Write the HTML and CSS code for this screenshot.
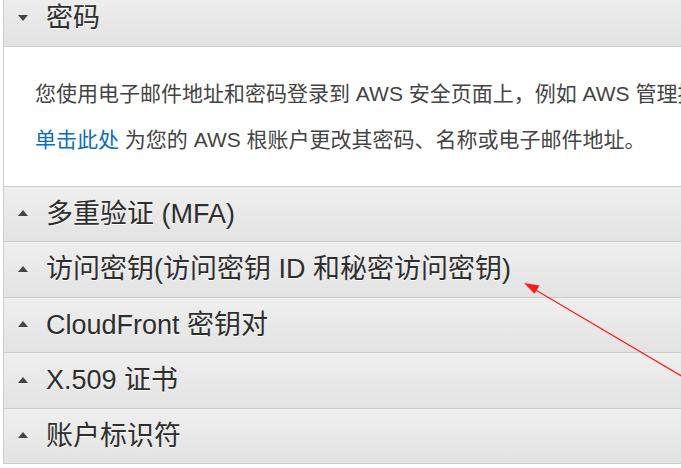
FILE: index.html
```html
<!DOCTYPE html>
<html lang="zh-CN">
<head>
<meta charset="utf-8">
<title>安全凭证</title>
<link rel="stylesheet" href="styles.css">
</head>
<body>
<div class="page">
  <div class="accordion">
    <section class="panel open first">
      <div class="panel-head"><span class="caret down"></span><span class="title">密码</span></div>
      <div class="panel-body">
        <p>您使用电子邮件地址和密码登录到 AWS 安全页面上，例如 AWS 管理控制台和 AWS 开发论坛。</p>
        <p><a href="#" class="link">单击此处</a> 为您的 AWS 根账户更改其密码、名称或电子邮件地址。</p>
      </div>
    </section>
    <section class="panel">
      <div class="panel-head"><span class="caret"></span><span class="title">多重验证 (MFA)</span></div>
    </section>
    <section class="panel">
      <div class="panel-head"><span class="caret"></span><span class="title">访问密钥(访问密钥 ID 和秘密访问密钥)</span></div>
    </section>
    <section class="panel">
      <div class="panel-head"><span class="caret"></span><span class="title">CloudFront 密钥对</span></div>
    </section>
    <section class="panel">
      <div class="panel-head"><span class="caret"></span><span class="title">X.509 证书</span></div>
    </section>
    <section class="panel">
      <div class="panel-head"><span class="caret"></span><span class="title">账户标识符</span></div>
    </section>
  </div>
  <svg class="annot" width="681" height="468" viewBox="0 0 681 468" aria-hidden="true">
    <line x1="534" y1="289" x2="700" y2="387" stroke="#ff1a1a" stroke-width="1.2"/>
    <polygon points="524,283 539.5,285.5 534.5,293.8" fill="#ff1a1a"/>
  </svg>
</div>
</body>
</html>
```

FILE: styles.css
```css
html, body {
  margin: 0;
  padding: 0;
  overflow: hidden;
  background: #ffffff;
}

.page {
  position: relative;
  width: 681px;
  height: 468px;
  overflow: hidden;
  font-family: "Liberation Sans", "Noto Sans CJK SC", sans-serif;
}

.accordion {
  width: 1000px;
  margin-left: 3px;
  margin-top: -9px;
  border-left: 1px solid #cccccc;
}

.panel-head {
  box-sizing: border-box;
  height: 55.5px;
  display: flex;
  align-items: center;
  background: linear-gradient(#efefef, #e3e3e3);
  border-bottom: 1px solid #cdcdcd;
  padding-left: 14px;
}

.caret {
  width: 0;
  height: 0;
  border-left: 5px solid transparent;
  border-right: 5px solid transparent;
  border-bottom: 6px solid #444444;
  margin-right: 18px;
  margin-top: -1px;
}

.caret.down {
  border-bottom: 0;
  border-top: 6px solid #444444;
}

.title {
  font-size: 27px;
  line-height: 30px;
  color: #2e2e2e;
  text-shadow: 0 1px 0 rgba(255, 255, 255, 0.9);
  white-space: nowrap;
}

.panel-body {
  box-sizing: border-box;
  height: 140px;
  padding: 34px 31px 0;
  border-bottom: 1px solid #cdcdcd;
  background: #ffffff;
}

.panel-body p {
  margin: 0 0 20px;
  font-size: 21px;
  line-height: 26px;
  color: #444444;
  white-space: nowrap;
}

.link {
  color: #0a6cc2;
  text-decoration: none;
}

.annot {
  position: absolute;
  left: 0;
  top: 0;
  pointer-events: none;
}
```
